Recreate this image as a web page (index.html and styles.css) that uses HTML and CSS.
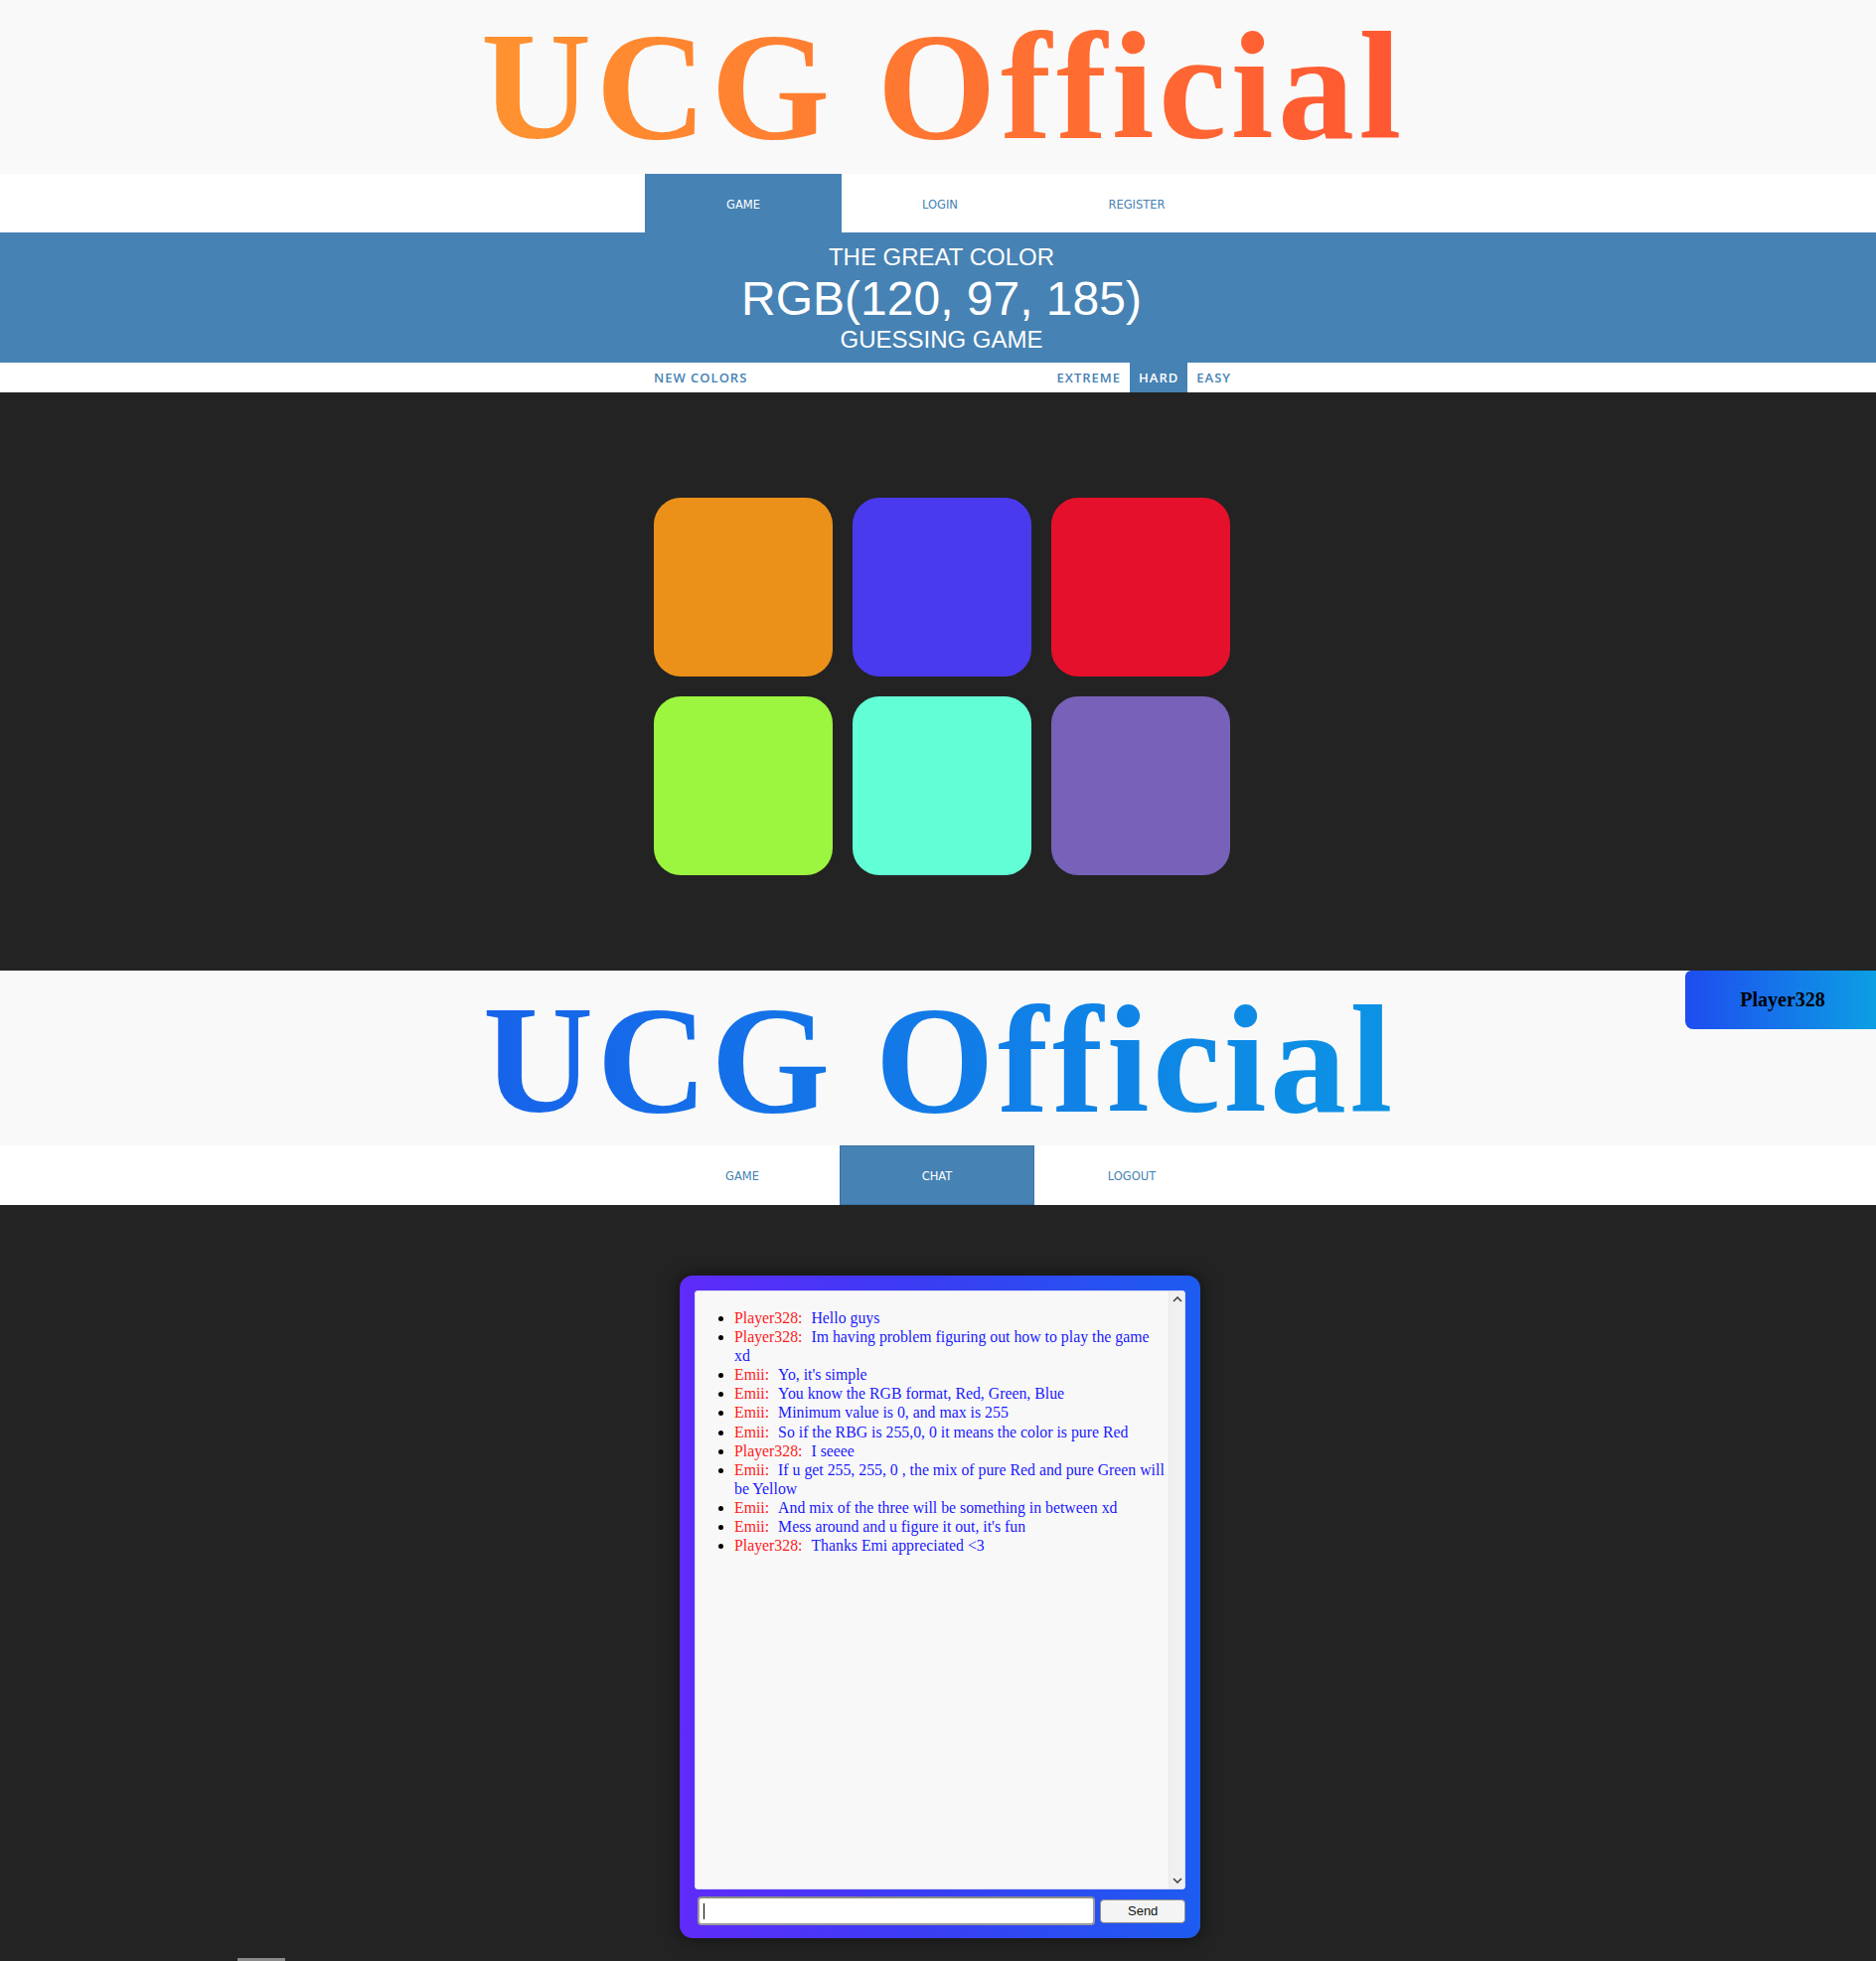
FILE: index.html
```html
<!DOCTYPE html>
<html lang="en">
<head>
<meta charset="utf-8">
<title>UCG Official</title>
<link rel="stylesheet" href="styles.css">
</head>
<body>
<section class="page">
  <header class="brand">
    <h1 class="logo logo-orange">UCG Official</h1>
  </header>
  <nav class="tabs tabs-game">
    <a class="tab active">Game</a>
    <a class="tab">Login</a>
    <a class="tab">Register</a>
  </nav>
  <div class="heading">
    <span class="heading-line">The Great Color</span>
    <span class="heading-color">RGB(120, 97, 185)</span>
    <span class="heading-line">Guessing Game</span>
  </div>
  <div class="stripe">
    <div class="stripe-inner">
      <button class="mode">New Colors</button>
      <div class="modes">
        <button class="mode">Extreme</button>
        <button class="mode selected">Hard</button>
        <button class="mode">Easy</button>
      </div>
    </div>
  </div>
  <main class="board">
    <div class="squares">
      <div class="square sq-orange"></div>
      <div class="square sq-blue"></div>
      <div class="square sq-red"></div>
      <div class="square sq-lime"></div>
      <div class="square sq-aqua"></div>
      <div class="square sq-purple"></div>
    </div>
  </main>
</section>

<section class="page page-chat">
  <header class="brand">
    <h1 class="logo logo-blue">UCG Official</h1>
    <div class="user-badge">Player328</div>
  </header>
  <nav class="tabs tabs-chat">
    <a class="tab">Game</a>
    <a class="tab active">Chat</a>
    <a class="tab">Logout</a>
  </nav>
  <main class="chat-area">
    <div class="chat-box">
      <div class="chat-log">
        <ul class="messages">
          <li><span class="name">Player328:</span>Hello guys</li>
          <li><span class="name">Player328:</span>Im having problem figuring out how to play the game xd</li>
          <li><span class="name">Emii:</span>Yo, it's simple</li>
          <li><span class="name">Emii:</span>You know the RGB format, Red, Green, Blue</li>
          <li><span class="name">Emii:</span>Minimum value is 0, and max is 255</li>
          <li><span class="name">Emii:</span>So if the RBG is 255,0, 0 it means the color is pure Red</li>
          <li><span class="name">Player328:</span>I seeee</li>
          <li><span class="name">Emii:</span>If u get 255, 255, 0 , the mix of pure Red and pure Green will be Yellow</li>
          <li><span class="name">Emii:</span>And mix of the three will be something in between xd</li>
          <li><span class="name">Emii:</span>Mess around and u figure it out, it's fun</li>
          <li><span class="name">Player328:</span>Thanks Emi appreciated &lt;3</li>
        </ul>
        <div class="scrollbar">
          <svg class="chev" width="10" height="6" viewBox="0 0 10 6"><path d="M1 5 L5 1 L9 5" fill="none" stroke="#444" stroke-width="1.6"/></svg>
          <svg class="chev" width="10" height="6" viewBox="0 0 10 6"><path d="M1 1 L5 5 L9 1" fill="none" stroke="#444" stroke-width="1.6"/></svg>
        </div>
      </div>
      <form class="chat-form">
        <div class="input-box"><input class="chat-input" type="text" aria-label="Message"></div>
        <button class="send" type="button">Send</button>
      </form>
    </div>
    <div class="footer-mark"></div>
  </main>
</section>
</body>
</html>
```

FILE: styles.css
```css
* { box-sizing: border-box; }

html, body {
  margin: 0;
  padding: 0;
}

body {
  background: #232323;
  font-family: "Liberation Sans", Arial, sans-serif;
}

.page { position: relative; }

/* Brand header */
.brand {
  position: relative;
  background: #f9f9f9;
  height: 175px;
  text-align: center;
  padding-left: 11px;
}
.page-chat .brand {
  height: 176px;
  padding-left: 3px;
}

.logo {
  display: inline-block;
  margin: 0;
  font-family: "Liberation Serif", "Times New Roman", serif;
  font-weight: 700;
  font-size: 154px;
  line-height: 175px;
  letter-spacing: 4.5px;
  font-variant-ligatures: none;
  -webkit-background-clip: text;
  background-clip: text;
  color: transparent;
}
.page-chat .logo {
  line-height: 176px;
  letter-spacing: 3.5px;
  padding-top: 2px;
}

.logo-orange { background-image: linear-gradient(90deg, #ff9330, #ff5733); }
.logo-blue { background-image: linear-gradient(90deg, #1763ea, #0c93e4); }

.user-badge {
  position: absolute;
  top: 0;
  right: 0;
  width: 192px;
  height: 59px;
  border-radius: 6px 0 0 8px;
  background: linear-gradient(90deg, #1e4cf0, #0c9fe3);
  font-family: "Liberation Serif", "Times New Roman", serif;
  font-weight: 700;
  font-size: 20px;
  color: #000;
  display: flex;
  align-items: center;
  justify-content: center;
  padding-left: 4px;
}

/* Tabs */
.tabs {
  background: #fff;
  height: 59px;
  display: flex;
  padding-left: calc(50% - 295px);
}
.tabs-chat { height: 60px; }

.tab {
  width: 198px;
  display: flex;
  align-items: center;
  justify-content: center;
  padding-top: 2px;
  font-family: "DejaVu Sans", Verdana, sans-serif;
  font-size: 11.5px;
  text-transform: uppercase;
  color: steelblue;
  text-decoration: none;
}
.tabs-chat .tab { width: 196px; }
.tab.active {
  background: steelblue;
  color: #fff;
}
.tabs-chat .tab.active { border: 1px solid #3a72a8; }

/* Heading */
.heading {
  background: steelblue;
  color: #fff;
  text-align: center;
  text-transform: uppercase;
  padding: 11px 0 9px 7px;
  height: 131px;
  line-height: 1.15;
  font-size: 24px;
  display: flex;
  flex-direction: column;
  align-items: center;
}
.heading-color { font-size: 48px; }

/* Stripe */
.stripe {
  background: #fff;
  height: 30px;
}
.stripe-inner {
  width: 600px;
  height: 100%;
  margin-left: calc(50% - 296px);
  display: flex;
  justify-content: space-between;
}
.modes { display: flex; height: 100%; }
.mode {
  border: none;
  background: none;
  height: 100%;
  padding: 0 9px 0 10px;
  font-family: "Open Sans", "DejaVu Sans", sans-serif;
  font-weight: 600;
  font-size: 13px;
  letter-spacing: 1px;
  text-transform: uppercase;
  color: steelblue;
  outline: none;
}
.modes .mode { padding: 0 9px; }
.mode.selected {
  background: steelblue;
  color: #fff;
}

/* Board */
.board {
  background: #232323;
  padding: 106px 0 96px;
}
.squares {
  width: 580px;
  margin-left: calc(50% - 286px);
  display: grid;
  grid-template-columns: repeat(3, 180px);
  grid-auto-rows: 180px;
  gap: 20px;
}
.square { border-radius: 15%; }
.sq-orange { background: rgb(235, 145, 26); }
.sq-blue { background: rgb(74, 58, 238); }
.sq-red { background: rgb(229, 16, 43); }
.sq-lime { background: rgb(156, 245, 63); }
.sq-aqua { background: rgb(98, 255, 214); }
.sq-purple { background: rgb(120, 97, 185); }

/* Chat */
.chat-area {
  background: #232323;
  padding-top: 71px;
}
.chat-box {
  width: 524px;
  height: 667px;
  margin-left: calc(50% - 260px);
  padding: 15px 15px 13px;
  border-radius: 13px;
  background: linear-gradient(90deg, #5f2bf9 0%, #3b3cf3 45%, #1d5cf0 100%);
  box-shadow: 0 0 14px 4px rgba(0, 0, 0, 0.35);
  display: flex;
  flex-direction: column;
}
.chat-log {
  height: 603px;
  background: #f8f8f8;
  border: 1px solid #dcdcf4;
  border-radius: 3px;
  display: flex;
  overflow: hidden;
}
.messages {
  flex: 1;
  margin: 17px 0;
  padding-left: 39px;
  font-family: "Liberation Serif", "Times New Roman", serif;
  font-size: 15.8px;
  line-height: 19.1px;
  color: #1a1aff;
}
.messages li::marker { color: #000; }
.name { color: #ff1a1a; margin-right: 9px; }

.scrollbar {
  width: 16px;
  background: #f0f0f0;
  border-left: 1px dotted #e2e2e2;
  display: flex;
  flex-direction: column;
  justify-content: space-between;
  align-items: center;
  padding: 5px 0 5px;
}
.chev { display: block; }

.chat-form {
  margin-top: 7px;
  display: flex;
  align-items: center;
  padding-left: 3px;
  gap: 5px;
}
.input-box {
  position: relative;
  width: 402px;
  height: 29px;
  background: #fff;
  border: 2px solid #9b9b9b;
  border-top-color: #8a8a8a;
  border-radius: 4px;
}
.input-box::before {
  content: "";
  position: absolute;
  left: 4px;
  top: 5px;
  width: 1px;
  height: 16px;
  background: #000;
}
.chat-input {
  width: 100%;
  height: 100%;
  border: none;
  background: transparent;
  outline: none;
  padding: 0 6px;
  font-size: 14px;
}
.send {
  width: 86px;
  height: 24px;
  background: #f4f4f4;
  border: 1px solid #8f8f8f;
  border-radius: 4px;
  font-family: "Liberation Sans", Arial, sans-serif;
  font-size: 13px;
  color: #111;
  padding: 0;
}

.footer-mark {
  margin: 20px 0 0 239px;
  width: 48px;
  height: 3px;
  background: #8a8a8a;
}
```
